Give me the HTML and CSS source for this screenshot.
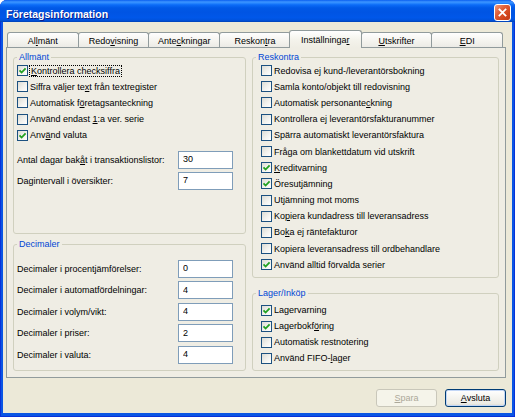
FILE: index.html
```html
<!DOCTYPE html>
<html lang="sv">
<head>
<meta charset="utf-8">
<title>Företagsinformation</title>
<link rel="stylesheet" href="styles.css">
</head>
<body>
<div class="window">
  <div class="titlebar">
    <span class="title">Företagsinformation</span>
    <span class="close">
      <svg viewBox="0 0 17 17" width="17" height="17"><path d="M5 5 L12 12 M12 5 L5 12" stroke="#fff" stroke-width="2" stroke-linecap="square"/></svg>
    </span>
  </div>
  <div class="client">
    <div class="tabs">
      <div class="tab">Al<u>l</u>mänt</div>
      <div class="tab">Redo<u>v</u>isning</div>
      <div class="tab">Ante<u>c</u>kningar</div>
      <div class="tab">Reskon<u>t</u>ra</div>
      <div class="tab active">Inställninga<u>r</u></div>
      <div class="tab"><u>U</u>tskrifter</div>
      <div class="tab"><u>E</u>DI</div>
    </div>
    <div class="panel">
      <div class="col">
        <fieldset class="group g-allmant">
          <legend>Allmänt</legend>
          <div class="gbody body-left">
            <div class="cbrow"><span class="cb"><svg viewBox="0 0 9 9"><path d="M1.5 4.3 L3.6 6.5 L7.6 2.3" /></svg></span><span class="focus"><u>K</u>ontrollera checksiffra</span></div>
            <div class="cbrow"><span class="cb"></span><span>Siffra väljer te<u>x</u>t från textregister</span></div>
            <div class="cbrow"><span class="cb"></span><span>Automatisk f<u>ö</u>retagsanteckning</span></div>
            <div class="cbrow"><span class="cb"></span><span>Använd endast <u>1</u>:a ver. serie</span></div>
            <div class="cbrow"><span class="cb"><svg viewBox="0 0 9 9"><path d="M1.5 4.3 L3.6 6.5 L7.6 2.3" /></svg></span><span>Anv<u>ä</u>nd valuta</span></div>
            <div class="fields fields-allmant">
              <label class="field"><span>Antal dagar bak<u>å</u>t i transaktionslistor:</span><input type="text" value="30" readonly></label>
              <label class="field"><span>Dagintervall i översikter:</span><input type="text" value="7" readonly></label>
            </div>
          </div>
        </fieldset>
        <fieldset class="group g-dec">
          <legend>Decimaler</legend>
          <div class="gbody body-left">
            <div class="fields fields-dec">
              <label class="field"><span>Decimaler i procentjämförelser:</span><input type="text" value="0" readonly></label>
              <label class="field"><span>Decimaler i automatfördelningar:</span><input type="text" value="4" readonly></label>
              <label class="field"><span>Decimaler i volym/vikt:</span><input type="text" value="4" readonly></label>
              <label class="field"><span>Decimaler i priser:</span><input type="text" value="2" readonly></label>
              <label class="field"><span>Decimaler i valuta:</span><input type="text" value="4" readonly></label>
            </div>
          </div>
        </fieldset>
      </div>
      <div class="col">
        <fieldset class="group g-reskontra">
          <legend>Reskontra</legend>
          <div class="gbody body-right">
            <div class="cbrow"><span class="cb"></span><span>Redovisa ej kund-/leverantörsbokning</span></div>
            <div class="cbrow"><span class="cb"></span><span>Samla konto/objekt till redovisning</span></div>
            <div class="cbrow"><span class="cb"></span><span>Automatisk personante<u>c</u>kning</span></div>
            <div class="cbrow"><span class="cb"></span><span>Kontrollera ej leverantörsfakturanummer</span></div>
            <div class="cbrow"><span class="cb"></span><span>Spärra automatiskt leverantörsfaktura</span></div>
            <div class="cbrow"><span class="cb"></span><span>Fråga om blankettdatum vid utskrift</span></div>
            <div class="cbrow"><span class="cb"><svg viewBox="0 0 9 9"><path d="M1.5 4.3 L3.6 6.5 L7.6 2.3" /></svg></span><span><u>K</u>reditvarning</span></div>
            <div class="cbrow"><span class="cb"><svg viewBox="0 0 9 9"><path d="M1.5 4.3 L3.6 6.5 L7.6 2.3" /></svg></span><span>Öresutjämning</span></div>
            <div class="cbrow"><span class="cb"></span><span>Utjämning mot moms</span></div>
            <div class="cbrow"><span class="cb"></span><span>Ko<u>p</u>iera kundadress till leveransadress</span></div>
            <div class="cbrow"><span class="cb"></span><span>Bo<u>k</u>a ej räntefakturor</span></div>
            <div class="cbrow"><span class="cb"></span><span>Kopiera leveransadress till ordbehandlare</span></div>
            <div class="cbrow"><span class="cb"><svg viewBox="0 0 9 9"><path d="M1.5 4.3 L3.6 6.5 L7.6 2.3" /></svg></span><span>Använd alltid förvalda serier</span></div>
          </div>
        </fieldset>
        <fieldset class="group g-lager">
          <legend>Lager/Inköp</legend>
          <div class="gbody body-right body-lager">
            <div class="cbrow"><span class="cb"><svg viewBox="0 0 9 9"><path d="M1.5 4.3 L3.6 6.5 L7.6 2.3" /></svg></span><span>Lagervarning</span></div>
            <div class="cbrow"><span class="cb"><svg viewBox="0 0 9 9"><path d="M1.5 4.3 L3.6 6.5 L7.6 2.3" /></svg></span><span>Lagerbokf<u>ö</u>ring</span></div>
            <div class="cbrow"><span class="cb"></span><span>Automatisk restnotering</span></div>
            <div class="cbrow"><span class="cb"></span><span>Använd FIFO-<u>l</u>ager</span></div>
          </div>
        </fieldset>
      </div>
    </div>
    <div class="buttons">
      <button class="btn disabled" type="button" disabled><u>S</u>para</button>
      <button class="btn default" type="button"><u>A</u>vsluta</button>
    </div>
  </div>
</div>
</body>
</html>
```

FILE: styles.css
```css
* { box-sizing: border-box; }
html, body { margin: 0; padding: 0; background: #ffffff; }
body {
  font-family: "Liberation Sans", Arial, sans-serif;
  font-size: 9px;
  color: #000;
}
u { text-underline-offset: 1px; }

.window {
  width: 515px;
  height: 417px;
  display: flex;
  flex-direction: column;
  background: #0A55E4;
  border-radius: 7px 7px 0 0;
  overflow: hidden;
  box-shadow: inset 1px 0 0 #0831D9, inset -1px 0 0 #0831D9, inset 0 -1px 0 #0831D9;
}

.titlebar {
  height: 22px;
  flex: none;
  display: flex;
  align-items: center;
  justify-content: space-between;
  padding: 3px 4px 0 6px;
  background: linear-gradient(to bottom, #0A5FF0 0%, #3D95FF 9%, #2A89FF 14%, #0C6CF7 22%, #0059E7 36%, #0054E3 55%, #0057E9 80%, #0052DC 92%, #0041B4 100%);
}
.title {
  color: #fff;
  font-weight: bold;
  font-size: 10.5px;
  text-shadow: 1px 1px 0 #0A1E8C;
  padding-top: 2px;
}
.close {
  width: 17px;
  height: 17px;
  border: 1px solid #fff;
  border-radius: 3px;
  background: linear-gradient(135deg, #F19C7D 0%, #E2623C 35%, #D2461C 70%, #C13A18 100%);
  display: flex;
}
.close svg { width: 15px; height: 15px; }

.client {
  flex: 1;
  margin: 0 3px 4px;
  background: #ECE9D8;
  padding: 8px 6px 0 3px;
  display: flex;
  flex-direction: column;
}

.tabs {
  display: grid;
  grid-template-columns: repeat(7, 1fr);
  width: 495px;
  height: 17px;
  margin-left: 1px;
  align-items: end;
}
.tab {
  height: 15px;
  margin-right: -1px;
  border: 1px solid #919B9C;
  border-bottom: none;
  border-radius: 3px 3px 0 0;
  background: linear-gradient(to bottom, #FEFEFE 0%, #F4F3EE 60%, #ECEBE6 100%);
  display: flex;
  align-items: center;
  justify-content: center;
  padding-top: 1px;
  white-space: nowrap;
}
.tab.active {
  height: 18px;
  margin: 0 -1px -1px;
  position: relative;
  z-index: 1;
  background: linear-gradient(to bottom, #FFFFFF 0%, #F4F3EC 50%, #EFEDE4 100%);
  padding-top: 0;
}

.panel {
  height: 331px;
  flex: none;
  border: 1px solid #919B9C;
  background: #EFEDE4;
  display: grid;
  grid-template-columns: 233px 1fr;
  column-gap: 6px;
  padding: 3.5px 6px 6px;
}
.col {
  display: flex;
  flex-direction: column;
  min-height: 0;
}

.group {
  border: 1px solid #D0D0BF;
  border-radius: 3px;
  margin: 0;
  padding: 0;
  min-width: 0;
}
.group legend {
  color: #0046D5;
  padding: 0 2px;
  margin-left: 3px;
  line-height: 11px;
}
.g-allmant { height: 182.5px; flex: none; }
.g-dec { flex: 1; margin-top: 5px; }
.g-reskontra { height: 226.5px; flex: none; }
.g-lager { flex: 1; margin-top: 9.5px; }

.gbody { display: flex; flex-direction: column; }
.body-left { padding: 0 12px 0 3px; }
.body-right { padding: 0 8px 0 8px; }
.body-lager { padding-top: 3.5px; }
.body-lager .cbrow { height: 16px; }

.cbrow {
  height: 16.2px;
  display: flex;
  align-items: center;
  gap: 2px;
  white-space: nowrap;
}
.cb {
  width: 11px;
  height: 11px;
  flex: none;
  border: 1px solid #1C5180;
  background: linear-gradient(135deg, #DCDCD5 0%, #F2F2EE 55%, #FFFFFF 100%);
  display: flex;
  align-items: center;
  justify-content: center;
}
.cb svg { width: 9px; height: 9px; }
.cb path { fill: none; stroke: #21A121; stroke-width: 1.8; }
.focus {
  outline: 1px dotted #000;
  outline-offset: 0;
  padding: 0 1px;
  line-height: 10px;
}

.fields { display: flex; flex-direction: column; }
.fields-allmant { margin-top: 7.5px; gap: 3px; }
.fields-dec { margin-top: 9.5px; gap: 3.5px; }
.field {
  display: grid;
  grid-template-columns: 1fr 55px;
  align-items: center;
  white-space: nowrap;
}
.field input {
  width: 55px;
  height: 18px;
  margin: 0;
  border: 1px solid #7F9DB9;
  background: #fff;
  font: inherit;
  color: #000;
  padding: 0 0 1px 4px;
  outline: none;
}

.buttons {
  display: flex;
  justify-content: flex-end;
  gap: 8px;
  margin-top: 11px;
}
.btn {
  width: 61px;
  height: 18px;
  font: inherit;
  border-radius: 3px;
  padding: 0;
  margin: 0;
}
.btn.disabled {
  border: 1px solid #C9C7BA;
  background: #F5F4EA;
  color: #ACA899;
}
.btn.default {
  border: 1px solid #003C74;
  background: linear-gradient(to bottom, #FFFFFF 0%, #F6F6F2 40%, #ECEBE4 85%, #D8D6CB 100%);
  box-shadow: inset 0 0 0 1px #C2D6F6;
  color: #000;
}
```
